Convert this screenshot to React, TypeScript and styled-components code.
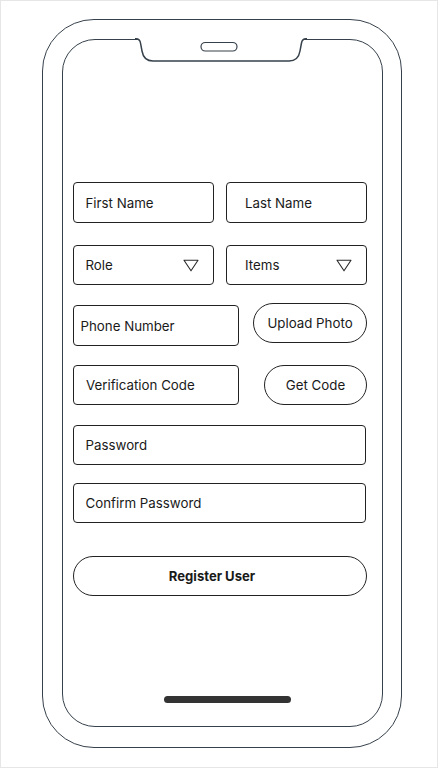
import React from "react";
import styled, { createGlobalStyle } from "styled-components";

const GlobalStyle = createGlobalStyle`
  html, body { margin: 0; padding: 0; background: #ffffff; }
  body { font-family: Inter, "Noto Sans", sans-serif; }
  * { box-sizing: border-box; }
`;

const Page = styled.div`
  width: 438px;
  height: 768px;
  border: 1px solid #e6e6e6;
  padding: 18px 0 0 41px;
  background: #ffffff;
`;

const Phone = styled.div`
  width: 360px;
  height: 729px;
  border: 1.5px solid #36414b;
  border-radius: 52px;
  padding: 18.5px 18.5px 20.5px;
  display: flex;
`;

const Screen = styled.div`
  position: relative;
  flex: 1;
  border: 1.5px solid #36414b;
  border-radius: 33px;
  display: flex;
  flex-direction: column;
  padding: 142.5px 12.5px 22.5px 10.5px;
`;

const Notch = styled.svg`
  position: absolute;
  left: 72.5px;
  top: -2.5px;
  width: 172px;
  height: 28px;
  overflow: visible;
`;

const Form = styled.div`
  display: flex;
  flex-direction: column;
  width: 294px;
`;

const Row = styled.div<{ $mt: number; $h: number }>`
  display: flex;
  justify-content: space-between;
  margin-top: ${(p) => p.$mt}px;
  height: ${(p) => p.$h}px;
`;

const Field = styled.div<{ $w: number; $h: number; $pad: number; $align?: string }>`
  width: ${(p) => p.$w}px;
  height: ${(p) => p.$h}px;
  align-self: ${(p) => p.$align || "flex-start"};
  border: 1.5px solid #222222;
  border-radius: 4px;
  display: flex;
  align-items: center;
  justify-content: space-between;
  padding: 0 14px 0 ${(p) => p.$pad}px;
  font-size: 13.3px;
  color: #1a1a1a;
  white-space: nowrap;
`;

const Pill = styled.div<{ $w: number; $h: number; $bold?: boolean; $align?: string }>`
  width: ${(p) => p.$w}px;
  height: ${(p) => p.$h}px;
  align-self: ${(p) => p.$align || "flex-start"};
  border: 1.5px solid #222222;
  border-radius: ${(p) => p.$h / 2}px;
  display: flex;
  align-items: center;
  justify-content: center;
  padding-right: ${(p) => (p.$bold ? 16 : 0)}px;
  font-size: ${(p) => (p.$bold ? 13.1 : 13.3)}px;
  font-weight: ${(p) => (p.$bold ? 700 : 400)};
  color: #1a1a1a;
  white-space: nowrap;
`;

const HomeBar = styled.div`
  margin-top: auto;
  margin-left: 91px;
  width: 127px;
  height: 7px;
  border-radius: 4px;
  background: #333333;
`;

const Caret = () => (
  <svg width="16" height="13" viewBox="0 0 16 13">
    <polygon points="1,1.2 15,1.2 8,11.8" fill="none" stroke="#2a2a2a" strokeWidth="1.1" strokeLinejoin="round" />
  </svg>
);

export default function App() {
  return (
    <>
      <GlobalStyle />
      <Page>
        <Phone>
          <Screen>
            <Notch viewBox="0 0 172 28">
              <path
                d="M0 0 L172 0 L172 1.75 L171 1.75 C168 1.75 167 3 166.5 6 L165 14 C164 20 161 24 154 24 L18 24 C11 24 8 20 7 14 L5.5 6 C5 3 4 1.75 1 1.75 L0 1.75 Z"
                fill="#fff"
              />
              <path
                d="M0 1.75 L1 1.75 C4 1.75 5 3 5.5 6 L7 14 C8 20 11 24 18 24 L154 24 C161 24 164 20 165 14 L166.5 6 C167 3 168 1.75 171 1.75 L172 1.75"
                fill="none"
                stroke="#36414b"
                strokeWidth="1.5"
              />
              <rect x="66" y="5.5" width="36" height="8.5" rx="4.25" fill="#fff" stroke="#36414b" strokeWidth="1.2" />
            </Notch>
            <Form>
              <Row $mt={0} $h={41}>
                <Field $w={141} $h={41} $pad={11.5}>First Name</Field>
                <Field $w={141} $h={41} $pad={18}>Last Name</Field>
              </Row>
              <Row $mt={22} $h={40}>
                <Field $w={141} $h={40} $pad={11.5}>
                  Role
                  <Caret />
                </Field>
                <Field $w={141} $h={40} $pad={18}>
                  Items
                  <Caret />
                </Field>
              </Row>
              <Row $mt={18} $h={43}>
                <Field $w={166} $h={41} $pad={6.5} $align="flex-end">Phone Number</Field>
                <Pill $w={114} $h={40}>Upload Photo</Pill>
              </Row>
              <Row $mt={19} $h={40}>
                <Field $w={166} $h={40} $pad={12}>Verification Code</Field>
                <Pill $w={103} $h={40}>Get Code</Pill>
              </Row>
              <Row $mt={20} $h={40}>
                <Field $w={293} $h={40} $pad={11.5}>Password</Field>
              </Row>
              <Row $mt={18} $h={40}>
                <Field $w={293} $h={40} $pad={11.5}>Confirm Password</Field>
              </Row>
              <Row $mt={33} $h={40}>
                <Pill $w={294} $h={40} $bold>Register User</Pill>
              </Row>
            </Form>
            <HomeBar />
          </Screen>
        </Phone>
      </Page>
    </>
  );
}
